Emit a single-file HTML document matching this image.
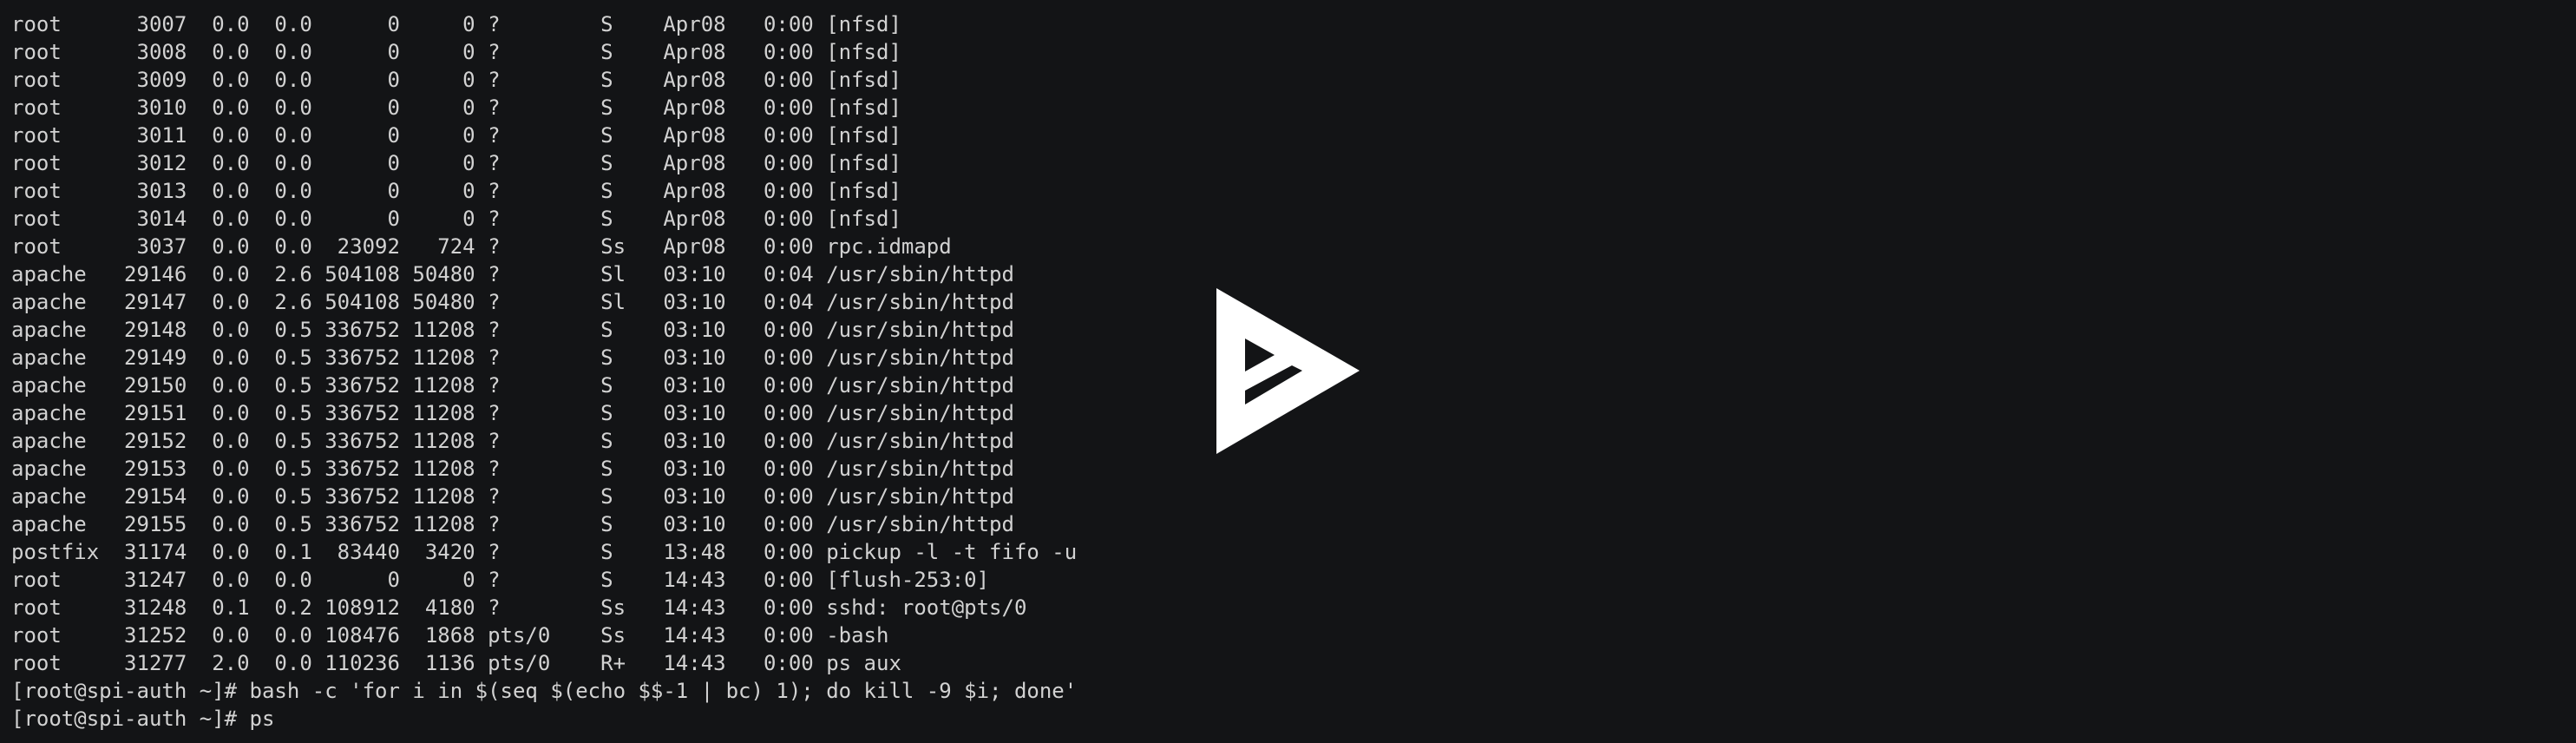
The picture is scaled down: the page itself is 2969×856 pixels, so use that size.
<!DOCTYPE html>
<html><head><meta charset="utf-8"><style>
html,body{margin:0;padding:0;background:#131416;width:2969px;height:856px;overflow:hidden}
pre{margin:0;position:absolute;left:13px;top:12px;font-family:"DejaVu Sans Mono","Liberation Mono",monospace;font-size:24px;line-height:32px;color:#d2d2d2}
svg{position:absolute;left:0;top:0}
</style></head><body>
<pre>root      3007  0.0  0.0      0     0 ?        S    Apr08   0:00 [nfsd]
root      3008  0.0  0.0      0     0 ?        S    Apr08   0:00 [nfsd]
root      3009  0.0  0.0      0     0 ?        S    Apr08   0:00 [nfsd]
root      3010  0.0  0.0      0     0 ?        S    Apr08   0:00 [nfsd]
root      3011  0.0  0.0      0     0 ?        S    Apr08   0:00 [nfsd]
root      3012  0.0  0.0      0     0 ?        S    Apr08   0:00 [nfsd]
root      3013  0.0  0.0      0     0 ?        S    Apr08   0:00 [nfsd]
root      3014  0.0  0.0      0     0 ?        S    Apr08   0:00 [nfsd]
root      3037  0.0  0.0  23092   724 ?        Ss   Apr08   0:00 rpc.idmapd
apache   29146  0.0  2.6 504108 50480 ?        Sl   03:10   0:04 /usr/sbin/httpd
apache   29147  0.0  2.6 504108 50480 ?        Sl   03:10   0:04 /usr/sbin/httpd
apache   29148  0.0  0.5 336752 11208 ?        S    03:10   0:00 /usr/sbin/httpd
apache   29149  0.0  0.5 336752 11208 ?        S    03:10   0:00 /usr/sbin/httpd
apache   29150  0.0  0.5 336752 11208 ?        S    03:10   0:00 /usr/sbin/httpd
apache   29151  0.0  0.5 336752 11208 ?        S    03:10   0:00 /usr/sbin/httpd
apache   29152  0.0  0.5 336752 11208 ?        S    03:10   0:00 /usr/sbin/httpd
apache   29153  0.0  0.5 336752 11208 ?        S    03:10   0:00 /usr/sbin/httpd
apache   29154  0.0  0.5 336752 11208 ?        S    03:10   0:00 /usr/sbin/httpd
apache   29155  0.0  0.5 336752 11208 ?        S    03:10   0:00 /usr/sbin/httpd
postfix  31174  0.0  0.1  83440  3420 ?        S    13:48   0:00 pickup -l -t fifo -u
root     31247  0.0  0.0      0     0 ?        S    14:43   0:00 [flush-253:0]
root     31248  0.1  0.2 108912  4180 ?        Ss   14:43   0:00 sshd: root@pts/0
root     31252  0.0  0.0 108476  1868 pts/0    Ss   14:43   0:00 -bash
root     31277  2.0  0.0 110236  1136 pts/0    R+   14:43   0:00 ps aux
[root@spi-auth ~]# bash -c 'for i in $(seq $(echo $$-1 | bc) 1); do kill -9 $i; done'
[root@spi-auth ~]# ps</pre>
<svg width="2969" height="856" viewBox="0 0 2969 856">
<polygon fill="#fff" points="1402,332 1567,427 1402,523"/>
<polygon fill="#131416" points="1435,390 1469,409 1435,428"/>
<polygon fill="#131416" points="1435,450 1489,421 1501,427 1435,466"/>
</svg>
</body></html>
